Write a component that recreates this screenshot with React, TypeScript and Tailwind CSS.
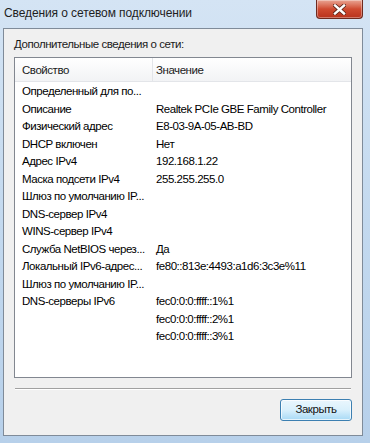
import React from "react";

const rows: [string, string][] = [
  ["Определенный для по...", ""],
  ["Описание", "Realtek PCIe GBE Family Controller"],
  ["Физический адрес", "E8-03-9A-05-AB-BD"],
  ["DHCP включен", "Нет"],
  ["Адрес IPv4", "192.168.1.22"],
  ["Маска подсети IPv4", "255.255.255.0"],
  ["Шлюз по умолчанию IP...", ""],
  ["DNS-сервер IPv4", ""],
  ["WINS-сервер IPv4", ""],
  ["Служба NetBIOS через...", "Да"],
  ["Локальный IPv6-адрес...", "fe80::813e:4493:a1d6:3c3e%11"],
  ["Шлюз по умолчанию IP...", ""],
  ["DNS-серверы IPv6", "fec0:0:0:ffff::1%1"],
  ["", "fec0:0:0:ffff::2%1"],
  ["", "fec0:0:0:ffff::3%1"],
];

export default function App() {
  return (
    <div
      className="w-[370px] h-[443px] relative overflow-hidden flex flex-col bg-gradient-to-b from-[#d4e4f4] via-[#c3d9ef] to-[#b7d0ea] text-black"
      style={{ fontFamily: '"Liberation Sans", Arial, sans-serif' }}
    >
      {/* title bar */}
      <div className="h-[28px] shrink-0 flex items-center pl-[4px] pb-[2px] text-[12px] tracking-[-0.1px] text-[#1e1e1e]">
        Сведения о сетевом подключении
      </div>
      <div className="absolute left-[316px] top-0 w-[47px] h-[19px] rounded-b-[4px] border border-t-0 border-[#6e2a1f] bg-gradient-to-b from-[#e8a493] via-[#cf4a30] to-[#b8321c] flex items-center justify-center shadow-[inset_0_0_0_1px_rgba(255,255,255,0.35)]">
        <svg width="13" height="11" viewBox="0 0 13 11">
          <path d="M2 1.5 L11 9.5 M11 1.5 L2 9.5" stroke="#5a2318" strokeWidth="4" strokeLinecap="square" />
          <path d="M2 1.5 L11 9.5 M11 1.5 L2 9.5" stroke="#ffffff" strokeWidth="2.4" strokeLinecap="square" />
        </svg>
      </div>

      {/* panel */}
      <div className="ml-[3px] mr-[7px] h-[408px] shrink-0 border border-[#7f8b99] bg-[#f0f0f0] flex flex-col px-[10px] text-[11.5px] tracking-[-0.45px]">
        <div className="h-[27px] flex items-end pb-[3px] text-[#1a1a1a]">Дополнительные сведения о сети:</div>
        <div className="mt-[1px] h-[321px] border border-[#828790] bg-white flex flex-col">
          <div className="h-[24px] shrink-0 flex bg-gradient-to-b from-white to-[#f2f3f5] border-b border-[#e3e5e9] text-[#1a1a1a]">
            <div className="w-[138px] shrink-0 flex items-center pl-[7px] pt-[2px] border-r border-[#e3e5e9]">Свойство</div>
            <div className="flex-1 flex items-center pl-[3px] pt-[2px]">Значение</div>
          </div>
          <div className="pt-[1px]">
            {rows.map(([k, v], i) => (
              <div key={i} className="h-[17.5px] flex items-center">
                <div className="w-[138px] shrink-0 pl-[7px] whitespace-nowrap overflow-hidden">{k}</div>
                <div className="pl-[3px] whitespace-nowrap">{v}</div>
              </div>
            ))}
          </div>
        </div>
        <div className="mt-[10px] h-[2px] mx-[1px] border-t border-[#a0a0a0] border-b border-b-white" />
        <div className="flex justify-end mt-[9px]">
          <button className="w-[72px] h-[22px] rounded-[3px] border border-[#3c7fb1] bg-gradient-to-b from-[#eaf6fd] via-[#d9f0fc] to-[#a7d9f5] text-[11.5px] tracking-[-0.45px] text-[#111] shadow-[inset_0_0_0_1px_rgba(255,255,255,0.7)]">
            Закрыть
          </button>
        </div>
      </div>
    </div>
  );
}
